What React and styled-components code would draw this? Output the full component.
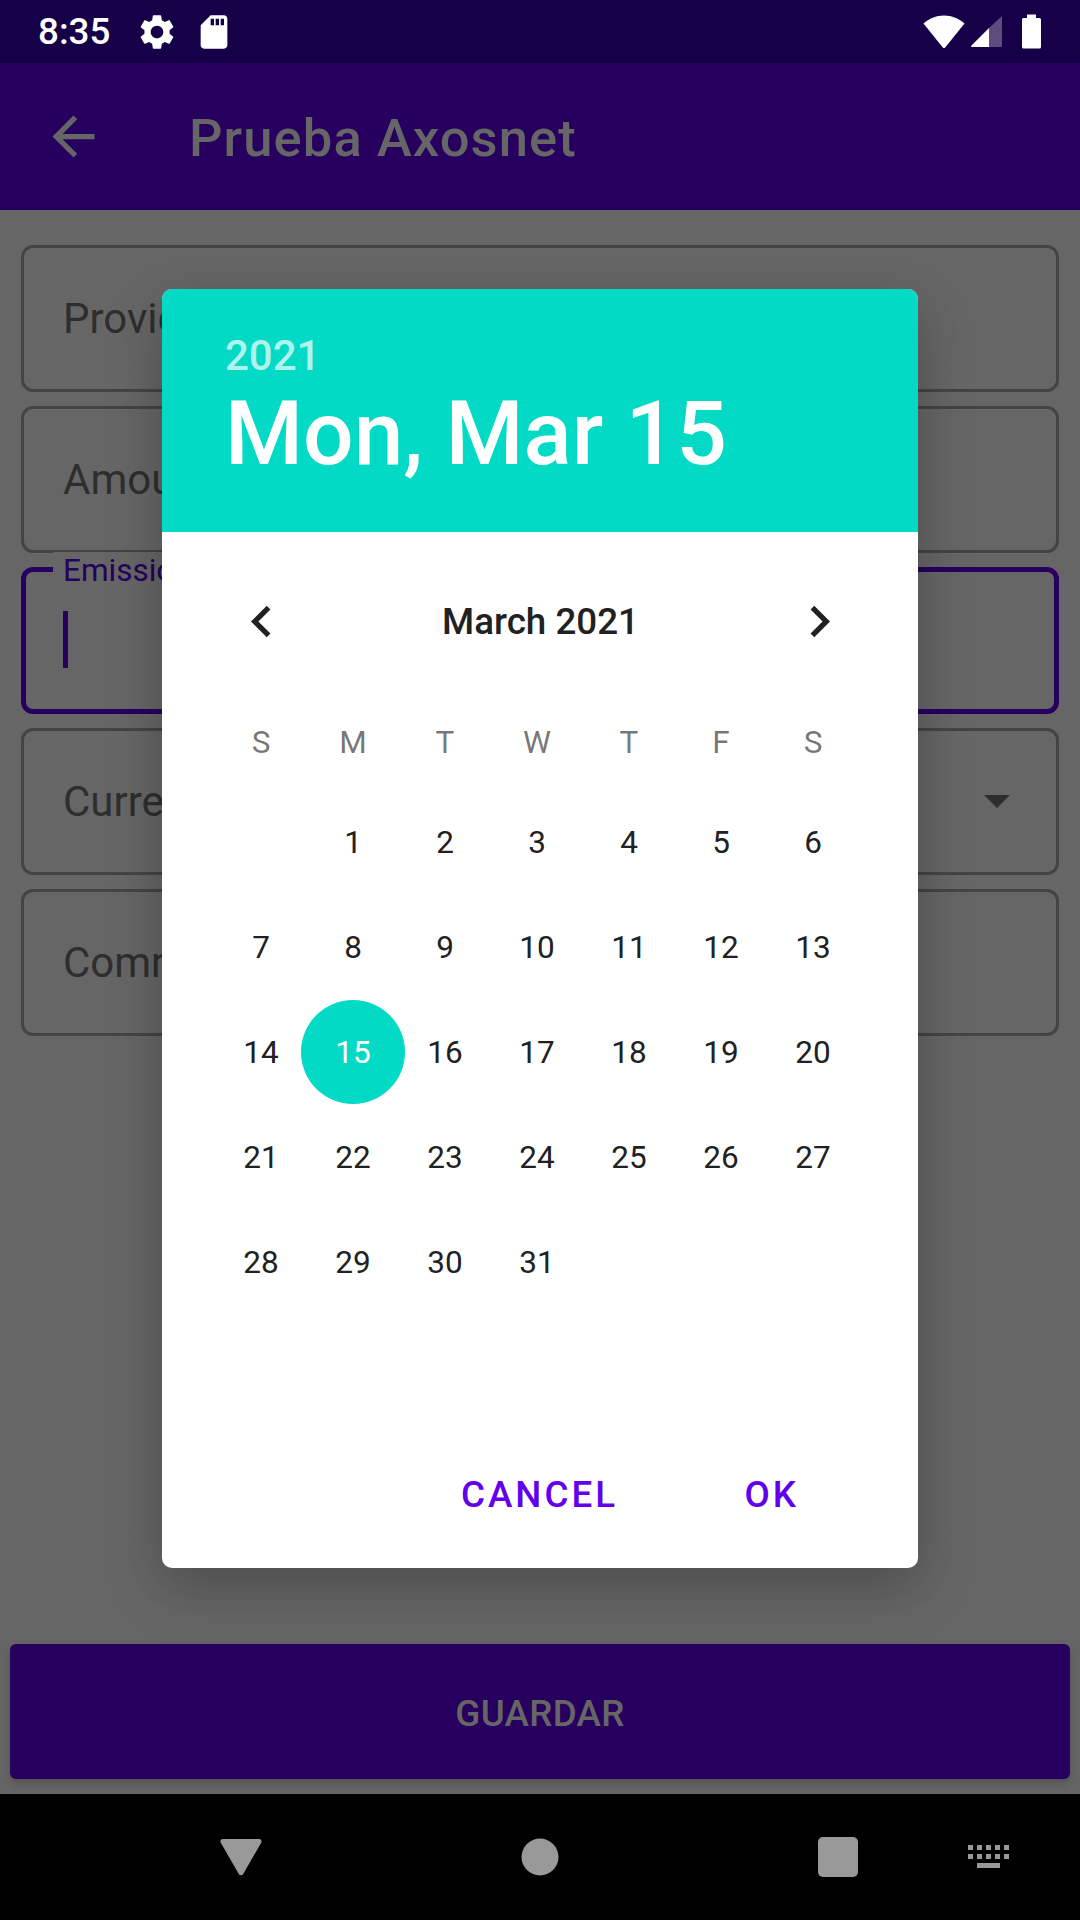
import React from "react";
import styled, { createGlobalStyle } from "styled-components";

const Global = createGlobalStyle`
  html, body { margin: 0; padding: 0; background: #666; }
  * { box-sizing: border-box; }
  body { font-family: Roboto, "Noto Sans", sans-serif; }
`;

const Screen = styled.div`
  position: relative;
  width: 1080px;
  height: 1920px;
  display: flex;
  flex-direction: column;
  overflow: hidden;
  background: #666;
`;

const StatusBar = styled.header`
  height: 63px;
  flex: none;
  background: #160047;
  display: flex;
  align-items: center;
  justify-content: space-between;
  padding: 0 39px 0 38px;
  color: #fff;
`;
const StatusGroup = styled.div`
  display: flex;
  align-items: center;
`;
const Clock = styled.span`
  font-size: 36.75px;
  font-weight: 500;
  line-height: 63px;
  width: 72px;
  white-space: nowrap;
`;
const StatusIcon = styled.svg`
  display: block;
  flex: none;
  margin-left: ${(p) => p.$ml || 0}px;
  fill: #fff;
`;

const AppBar = styled.div`
  height: 147px;
  flex: none;
  background: #27005f;
  display: flex;
  align-items: center;
  padding-left: 42px;
  color: #666;
`;
const BackIcon = styled.svg`
  width: 63px;
  height: 63px;
  fill: #666;
  flex: none;
`;
const Title = styled.h1`
  margin: 4px 0 0 84px;
  font-size: 52.5px;
  font-weight: 500;
  line-height: 1;
  color: #666;
  letter-spacing: 1.1px;
`;

const Content = styled.main`
  flex: 1;
  display: flex;
  flex-direction: column;
  justify-content: space-between;
  padding: 35px 10px 15px;
`;
const Form = styled.div`
  display: flex;
  flex-direction: column;
  gap: 14px;
  padding: 0 11px;
`;
const Field = styled.div`
  position: relative;
  height: 147px;
  border: ${(p) => (p.$focused ? "5px solid #27005f" : "3px solid #444")};
  border-radius: 12px;
  display: flex;
  align-items: center;
  padding-left: ${(p) => (p.$focused ? 37 : 39)}px;
  padding-right: 46px;
  justify-content: space-between;
`;
const FieldLabel = styled.span`
  font-size: 42px;
  color: #2e2e2e;
  white-space: nowrap;
`;
const FloatingLabel = styled.span`
  position: absolute;
  left: 27px;
  top: -20px;
  padding: 0 10px;
  font-size: 31.5px;
  line-height: 37px;
  color: #27005f;
  background: #666;
  white-space: nowrap;
`;
const Caret = styled.span`
  display: block;
  width: 5px;
  height: 57px;
  margin-top: -2px;
  background: #27005f;
`;
const Arrow = styled.svg`
  width: 26px;
  height: 13px;
  fill: #2e2e2e;
`;

const SaveButton = styled.button`
  height: 135px;
  width: 100%;
  border: 0;
  border-radius: 6px;
  padding: 3px 0 0;
  background: #27005f;
  color: #666;
  font-family: inherit;
  font-size: 36.75px;
  font-weight: 500;
  letter-spacing: 0.3px;
  box-shadow: 0 4px 10px rgba(0, 0, 0, 0.22);
`;

const NavBar = styled.nav`
  height: 126px;
  flex: none;
  background: #000;
  display: flex;
  align-items: center;
  padding-left: 220px;
`;
const NavIcon = styled.svg`
  display: block;
  flex: none;
  fill: #999;
  margin-left: ${(p) => p.$ml || 0}px;
`;

const Dialog = styled.section`
  position: absolute;
  left: 162px;
  top: 289px;
  width: 756px;
  height: 1279px;
  border-radius: 10px;
  background: #fff;
  overflow: hidden;
  display: flex;
  flex-direction: column;
`;
const DialogShadow = styled.div`
  position: absolute;
  left: 162px;
  top: 289px;
  width: 756px;
  height: 1279px;
  border-radius: 10px;
  box-shadow: 0 24px 60px rgba(0, 0, 0, 0.18), 0 9px 46px rgba(0, 0, 0, 0.08);
`;
const DialogHeader = styled.div`
  height: 243px;
  flex: none;
  background: #03dac5;
  padding: 42px 0 0 63px;
  color: #fff;
`;
const Year = styled.div`
  font-size: 42px;
  font-weight: 500;
  line-height: 50px;
  color: rgba(255, 255, 255, 0.7);
`;
const DateText = styled.div`
  font-size: 89.25px;
  font-weight: 500;
  line-height: 106px;
  white-space: nowrap;
`;
const MonthRow = styled.div`
  height: 63px;
  margin-top: 58px;
  padding: 0 67px 0 68px;
  display: flex;
  align-items: center;
  justify-content: space-between;
  flex: none;
`;
const Chevron = styled.svg`
  width: 63px;
  height: 63px;
  fill: #212121;
  flex: none;
`;
const MonthName = styled.div`
  font-size: 36.75px;
  font-weight: 500;
  color: #212121;
`;
const Weekdays = styled.div`
  margin-top: 64px;
  padding-left: 53px;
  display: grid;
  grid-template-columns: repeat(7, 92px);
  height: 50px;
  align-items: center;
  text-align: center;
  font-size: 31.5px;
  color: rgba(0, 0, 0, 0.54);
`;
const Weekday = styled.div``;
const DayGrid = styled.div`
  margin-top: 23px;
  padding-left: 53px;
  display: grid;
  grid-template-columns: repeat(7, 92px);
  grid-auto-rows: 105px;
`;
const Day = styled.div`
  position: relative;
  display: flex;
  align-items: center;
  justify-content: center;
  font-size: 31.5px;
  color: ${(p) => (p.$selected ? "#fff" : "#212121")};
  grid-column-start: ${(p) => p.$start || "auto"};
  z-index: 0;
  &::before {
    content: "";
    display: ${(p) => (p.$selected ? "block" : "none")};
    position: absolute;
    z-index: -1;
    left: -6px;
    top: 0;
    width: 104px;
    height: 104px;
    border-radius: 50%;
    background: #03dac5;
  }
`;
const Actions = styled.div`
  margin-top: auto;
  height: 148px;
  display: flex;
  padding: 0 119px 0 299px;
  align-items: center;
  justify-content: space-between;
  flex: none;
`;
const Action = styled.span`
  font-size: 36.75px;
  font-weight: 500;
  letter-spacing: 3px;
  color: #6200ee;
`;

const weekdays = ["S", "M", "T", "W", "T", "F", "S"];
const days = Array.from({ length: 31 }, (_, i) => i + 1);

export default function App() {
  return (
    <Screen>
      <Global />
      <StatusBar>
        <StatusGroup>
          <Clock>8:35</Clock>
          <StatusIcon $ml={26} width="42" height="42" viewBox="0 0 24 24">
            <path d="M19.14 12.94c.04-.3.06-.61.06-.94 0-.32-.02-.64-.07-.94l2.03-1.58c.18-.14.23-.41.12-.61l-1.92-3.32c-.12-.22-.37-.29-.59-.22l-2.39.96c-.5-.38-1.03-.7-1.62-.94l-.36-2.54c-.04-.24-.24-.41-.48-.41h-3.84c-.24 0-.43.17-.47.41l-.36 2.54c-.59.24-1.13.57-1.62.94l-2.39-.96c-.22-.08-.47 0-.59.22L2.74 8.87c-.12.21-.08.47.12.61l2.03 1.58c-.05.3-.09.63-.09.94s.02.64.07.94l-2.03 1.58c-.18.14-.23.41-.12.61l1.92 3.32c.12.22.37.29.59.22l2.39-.96c.5.38 1.03.7 1.62.94l.36 2.54c.05.24.24.41.48.41h3.84c.24 0 .44-.17.47-.41l.36-2.54c.59-.24 1.13-.56 1.62-.94l2.39.96c.22.08.47 0 .59-.22l1.92-3.32c.12-.22.07-.47-.12-.61l-2.01-1.58zM12 15.6c-1.98 0-3.6-1.62-3.6-3.6s1.62-3.6 3.6-3.6 3.6 1.62 3.6 3.6-1.62 3.6-3.6 3.6z" />
          </StatusIcon>
          <StatusIcon $ml={16} width="40" height="40" viewBox="0 0 24 24">
            <path d="M18 2h-8L4.02 8 4 20c0 1.1.9 2 2 2h12c1.1 0 2-.9 2-2V4c0-1.1-.9-2-2-2zm-6 6h-2V4h2v4zm3 0h-2V4h2v4zm3 0h-2V4h2v4z" />
          </StatusIcon>
        </StatusGroup>
        <StatusGroup>
          <StatusIcon width="42" height="34" viewBox="0 0 42 34">
            <path d="M0.5 8.5C6 3.5 13 0.5 21 0.5s15 3 20.500 8L22.200 32.500a1.600 1.600 0 0 1-2.400 0z" />
          </StatusIcon>
          <StatusIcon $ml={5} width="32" height="33" viewBox="0 0 32 33">
            <path d="M1 31L19 13v19H2a1 1 0 0 1-1-1z" />
            <path d="M19 13L32 1v30a1 1 0 0 1-1 1H19z" opacity="0.3" />
          </StatusIcon>
          <StatusIcon $ml={20} width="19" height="35" viewBox="0 0 19 35">
            <path d="M5 0.500h9v3.500h3.500a1.500 1.500 0 0 1 1.500 1.500V33a1.500 1.500 0 0 1-1.500 1.500H1.500A1.500 1.500 0 0 1 0 33V5.500A1.500 1.500 0 0 1 1.500 4H5z" />
          </StatusIcon>
        </StatusGroup>
      </StatusBar>

      <AppBar>
        <BackIcon viewBox="0 0 24 24">
          <path d="M20 11H7.830l5.590-5.590L12 4l-8 8 8 8 1.410-1.410L7.830 13H20v-2z" />
        </BackIcon>
        <Title>Prueba Axosnet</Title>
      </AppBar>

      <Content>
        <Form>
          <Field><FieldLabel>Provider</FieldLabel></Field>
          <Field><FieldLabel>Amount</FieldLabel></Field>
          <Field $focused>
            <FloatingLabel>Emission date</FloatingLabel>
            <Caret />
          </Field>
          <Field>
            <FieldLabel>Currency</FieldLabel>
            <Arrow viewBox="0 0 26 13"><path d="M0 0h26L13 13z" /></Arrow>
          </Field>
          <Field><FieldLabel>Comments</FieldLabel></Field>
        </Form>
        <SaveButton>GUARDAR</SaveButton>
      </Content>

      <NavBar>
        <NavIcon width="42" height="38" viewBox="0 0 42 38">
          <path d="M3 1h36a2.500 2.500 0 0 1 2.200 3.800L23.200 36a2.500 2.500 0 0 1-4.400 0L0.800 4.800A2.500 2.500 0 0 1 3 1z" />
        </NavIcon>
        <NavIcon $ml={259} width="38" height="38" viewBox="0 0 38 38">
          <circle cx="19" cy="19" r="18.500" />
        </NavIcon>
        <NavIcon $ml={259} width="40" height="40" viewBox="0 0 40 40">
          <rect width="40" height="40" rx="5" />
        </NavIcon>
        <NavIcon $ml={110} width="41" height="24" viewBox="0 0 41 24">
          <rect x="0" y="0" width="5" height="5" />
          <rect x="9" y="0" width="5" height="5" />
          <rect x="18" y="0" width="5" height="5" />
          <rect x="27" y="0" width="5" height="5" />
          <rect x="36" y="0" width="5" height="5" />
          <rect x="0" y="9" width="5" height="5" />
          <rect x="9" y="9" width="5" height="5" />
          <rect x="18" y="9" width="5" height="5" />
          <rect x="27" y="9" width="5" height="5" />
          <rect x="36" y="9" width="5" height="5" />
          <rect x="9" y="18" width="23" height="5" />
        </NavIcon>
      </NavBar>

      <DialogShadow />
      <Dialog>
        <DialogHeader>
          <Year>2021</Year>
          <DateText>Mon, Mar 15</DateText>
        </DialogHeader>
        <MonthRow>
          <Chevron viewBox="0 0 24 24">
            <path d="M15.410 7.410L14 6l-6 6 6 6 1.410-1.410L10.830 12z" />
          </Chevron>
          <MonthName>March 2021</MonthName>
          <Chevron viewBox="0 0 24 24">
            <path d="M10 6L8.590 7.410 13.170 12l-4.580 4.590L10 18l6-6z" />
          </Chevron>
        </MonthRow>
        <Weekdays>
          {weekdays.map((d, i) => (
            <Weekday key={i}>{d}</Weekday>
          ))}
        </Weekdays>
        <DayGrid>
          {days.map((d) => (
            <Day key={d} $start={d === 1 ? 2 : undefined} $selected={d === 15}>
              {d}
            </Day>
          ))}
        </DayGrid>
        <Actions>
          <Action>CANCEL</Action>
          <Action>OK</Action>
        </Actions>
      </Dialog>
    </Screen>
  );
}
